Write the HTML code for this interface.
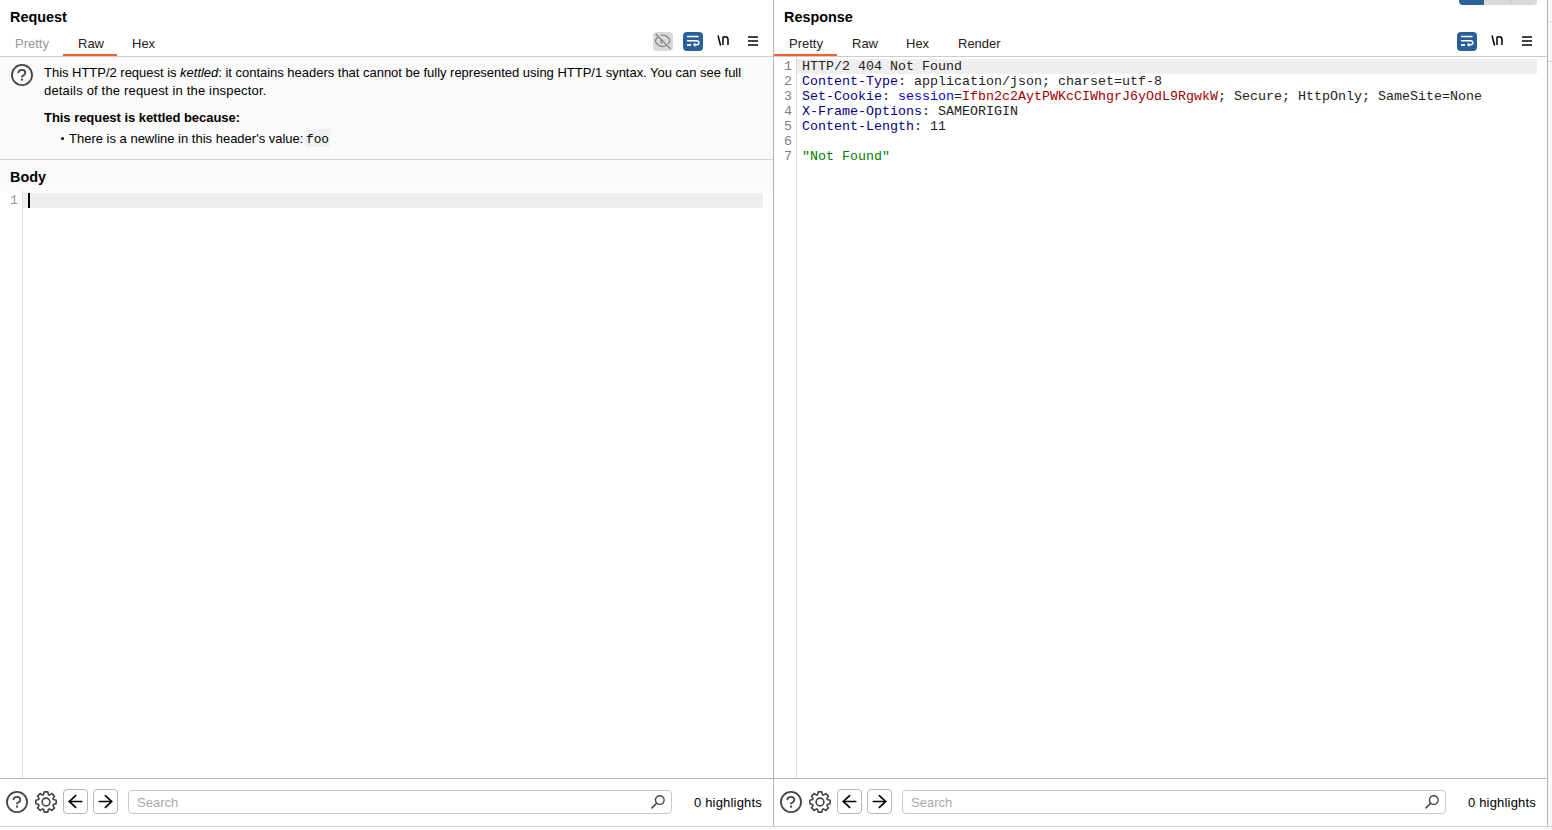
<!DOCTYPE html>
<html><head><meta charset="utf-8">
<style>
*{margin:0;padding:0;box-sizing:border-box}
html,body{width:1552px;height:830px;overflow:hidden;background:#fff}
body{position:relative;font-family:"Liberation Sans",sans-serif;color:#000}
.a{position:absolute;white-space:pre}
.title{font-weight:bold;font-size:15.4px;line-height:18px;transform:scaleX(0.935);transform-origin:0 0}
.tab{font-size:13px;line-height:15px}
.ui{font-size:13px;line-height:15px}
.mono{font-family:"Liberation Mono",monospace}
.hn{color:#000080}
.hl{position:absolute;height:1px}
.vl{position:absolute;width:1px}
</style></head><body>
<div class="a title" style="left:10px;top:8px">Request</div>
<div class="a tab" style="left:15px;top:36px;color:#999">Pretty</div>
<div class="a tab" style="left:78px;top:36px;color:#222">Raw</div>
<div class="a tab" style="left:132px;top:36px;color:#222">Hex</div>
<div class="a" style="left:63px;top:54px;width:54px;height:2px;background:#ff5c26"></div>
<div class="hl" style="left:0px;top:56px;width:773px;background:#c9cdcd"></div>
<svg class="a" style="left:653px;top:32px" width="20" height="19" viewBox="0 0 20 19"><rect width="20" height="19" rx="4" fill="#d9d9d9"/>
<g fill="none" stroke="#888" stroke-width="1.3" stroke-linecap="round">
<path d="M5,4.8 C3.6,6.2 2.3,7.6 2.3,9 C3,11.8 6,14.5 9.4,14.5 C10.8,14.5 12.1,14.1 13.1,13.5"/>
<path d="M8.4,3.3 C11.6,2.4 15.4,4.8 16.9,8.2 C17.1,9.3 16.4,10.6 15.4,11.5"/>
<path d="M8.3,8 C7.5,9 7.8,10.4 8.9,11.1"/>
<path d="M3.1,2.2 L17.2,16.6"/></g></svg>
<svg class="a" style="left:683px;top:32px" width="20" height="19" viewBox="0 0 20 19"><rect width="20" height="19" rx="4" fill="#2a6099"/>
<g fill="none" stroke="#fff" stroke-width="1.4" stroke-linecap="round">
<path d="M4.6,4.5 H15"/><path d="M4.6,8.8 H13.7 C15,8.8 15.9,9.7 15.9,10.8 C15.9,11.9 15,12.8 13.7,12.8 H11.8"/></g>
<rect x="4" y="12.1" width="4.1" height="1.8" fill="#fff"/>
<path d="M9.8,12.8 L12.4,10.6 L12.4,15 Z" fill="#fff"/></svg>
<svg class="a" style="left:716px;top:34px" width="14" height="13" viewBox="0 0 14 13"><g fill="none" stroke="#000" stroke-width="1.5"><path d="M2,1.5 L4.6,11.5"/><path d="M7,11 V3.2 C7.8,3 8.6,2.8 9.4,2.8 C11.1,2.8 12,3.8 12,5.6 V11" /></g></svg>
<div class="a" style="left:748px;top:36px;width:10px;height:2px;background:#444"></div>
<div class="a" style="left:748px;top:40px;width:10px;height:2px;background:#444"></div>
<div class="a" style="left:748px;top:44px;width:10px;height:2px;background:#444"></div>

  <div class="a" style="left:0;top:57px;width:773px;height:134px;background:#fafafa"></div>
  <div class="hl" style="left:0;top:159px;width:773px;background:#d6d6d6"></div>
  <svg class="a" style="left:11px;top:64px" width="22" height="22" viewBox="0 0 22 22"><circle cx="11" cy="11" r="10.05" fill="none" stroke="#444" stroke-width="1.8"/><path d="M7.4,8.4 C7.8,6.8 9.2,5.9 11,5.9 C12.9,5.9 14.3,7.2 14.3,9 C14.3,10.9 12.4,11.6 11,12.5" fill="none" stroke="#444" stroke-width="1.8" stroke-linecap="round"/><rect x="10" y="14.6" width="2" height="2" fill="#444"/></svg>
  <div class="a ui" style="left:44px;top:64px;line-height:18px;letter-spacing:-0.02px">This HTTP/2 request is <i>kettled</i>: it contains headers that cannot be fully represented using HTTP/1 syntax. You can see full</div>
  <div class="a ui" style="left:44px;top:82px;line-height:18px;letter-spacing:0.18px">details of the request in the inspector.</div>
  <div class="a ui" style="left:44px;top:110px;font-weight:bold;letter-spacing:-0.04px">This request is kettled because:</div>
  <div class="a" style="left:61px;top:137px;width:3.4px;height:3.4px;border-radius:50%;background:#000"></div>
  <div class="a ui" style="left:69px;top:131px">There is a newline in this header's value: </div>
  <div class="a" style="left:306px;top:129px;width:24px;height:18px;background:#f0f0f2"></div>
  <div class="a mono" style="left:306px;top:132px;font-size:12.8px">foo</div>
  <div class="a title" style="left:10px;top:168px">Body</div>
  <div class="vl" style="left:22px;top:191px;height:587px;background:#dcdcdc"></div>
  <div class="a" style="left:23px;top:193px;width:740px;height:15px;background:#efefef"></div>
  <div class="a" style="left:28px;top:193px;width:2px;height:15px;background:#000"></div>
  <div class="a mono" style="left:10px;top:193px;font-size:13.33px;line-height:15px;color:#999">1</div>

<div class="hl" style="left:0px;top:778px;width:773px;background:#b9b5b5"></div>
<svg class="a" style="left:6px;top:791px" width="22" height="22" viewBox="0 0 22 22"><circle cx="11" cy="11" r="10.05" fill="none" stroke="#444" stroke-width="1.8"/><path d="M7.4,8.4 C7.8,6.8 9.2,5.9 11,5.9 C12.9,5.9 14.3,7.2 14.3,9 C14.3,10.9 12.4,11.6 11,12.5" fill="none" stroke="#444" stroke-width="1.8" stroke-linecap="round"/><rect x="10" y="14.6" width="2" height="2" fill="#444"/></svg>
<svg class="a" style="left:34px;top:790px" width="24" height="24" viewBox="0 0 24 24"><path d="M9.49,4.72 L10.21,1.86 L13.79,1.86 L14.51,4.72 A7.70,7.70 0 0 0 15.38,5.08 L17.91,3.56 L20.44,6.09 L18.92,8.62 A7.70,7.70 0 0 0 19.28,9.49 L22.14,10.21 L22.14,13.79 L19.28,14.51 A7.70,7.70 0 0 0 18.92,15.38 L20.44,17.91 L17.91,20.44 L15.38,18.92 A7.70,7.70 0 0 0 14.51,19.28 L13.79,22.14 L10.21,22.14 L9.49,19.28 A7.70,7.70 0 0 0 8.62,18.92 L6.09,20.44 L3.56,17.91 L5.08,15.38 A7.70,7.70 0 0 0 4.72,14.51 L1.86,13.79 L1.86,10.21 L4.72,9.49 A7.70,7.70 0 0 0 5.08,8.62 L3.56,6.09 L6.09,3.56 L8.62,5.08 A7.70,7.70 0 0 0 9.49,4.72 Z" fill="none" stroke="#444" stroke-width="1.6" stroke-linejoin="round"/><circle cx="12" cy="12" r="3.9" fill="none" stroke="#444" stroke-width="1.6"/></svg>
<div class="a" style="left:63px;top:789px;width:25px;height:25px;border:1px solid #bcb5b5;border-radius:4px"></div>
<div class="a" style="left:93px;top:789px;width:25px;height:25px;border:1px solid #bcb5b5;border-radius:4px"></div>
<svg class="a" style="left:63px;top:789px" width="25" height="25" viewBox="0 0 25 25"><g fill="none" stroke="#000" stroke-width="1.7" stroke-linecap="round" stroke-linejoin="miter"><path d="M6.3,12.5 H18.7"/><path d="M12.6,6.6 L6.4,12.5 L12.6,18.4"/></g></svg>
<svg class="a" style="left:93px;top:789px" width="25" height="25" viewBox="0 0 25 25"><g fill="none" stroke="#000" stroke-width="1.7" stroke-linecap="round" stroke-linejoin="miter"><path d="M6.3,12.5 H18.5"/><path d="M12.4,6.6 L18.6,12.5 L12.4,18.4"/></g></svg>
<div class="a" style="left:128px;top:790px;width:544px;height:24px;border:1px solid #cbc8c8;border-radius:4px"></div>
<div class="a ui" style="left:137px;top:795px;color:#a8a8a8">Search</div>
<svg class="a" style="left:650px;top:794px" width="16" height="16" viewBox="0 0 16 16"><circle cx="9.8" cy="6.1" r="4.3" fill="none" stroke="#444" stroke-width="1.4"/><path d="M6.6,9.3 L2,13.9" stroke="#444" stroke-width="1.6" stroke-linecap="round"/></svg>
<div class="a ui" style="left:694px;top:795px;letter-spacing:0.18px">0 highlights</div>
<div class="vl" style="left:773px;top:0;height:826px;background:#b5b1b1"></div>
<div class="a title" style="left:784px;top:8px">Response</div>
<div class="a tab" style="left:789px;top:36px;color:#222">Pretty</div>
<div class="a tab" style="left:852px;top:36px;color:#222">Raw</div>
<div class="a tab" style="left:906px;top:36px;color:#222">Hex</div>
<div class="a tab" style="left:958px;top:36px;color:#222">Render</div>
<div class="a" style="left:774px;top:54px;width:63px;height:2px;background:#ff5c26"></div>
<div class="hl" style="left:774px;top:56px;width:773px;background:#c9cdcd"></div>
<svg class="a" style="left:1457px;top:32px" width="20" height="19" viewBox="0 0 20 19"><rect width="20" height="19" rx="4" fill="#2a6099"/>
<g fill="none" stroke="#fff" stroke-width="1.4" stroke-linecap="round">
<path d="M4.6,4.5 H15"/><path d="M4.6,8.8 H13.7 C15,8.8 15.9,9.7 15.9,10.8 C15.9,11.9 15,12.8 13.7,12.8 H11.8"/></g>
<rect x="4" y="12.1" width="4.1" height="1.8" fill="#fff"/>
<path d="M9.8,12.8 L12.4,10.6 L12.4,15 Z" fill="#fff"/></svg>
<svg class="a" style="left:1490px;top:34px" width="14" height="13" viewBox="0 0 14 13"><g fill="none" stroke="#000" stroke-width="1.5"><path d="M2,1.5 L4.6,11.5"/><path d="M7,11 V3.2 C7.8,3 8.6,2.8 9.4,2.8 C11.1,2.8 12,3.8 12,5.6 V11" /></g></svg>
<div class="a" style="left:1522px;top:36px;width:10px;height:2px;background:#444"></div>
<div class="a" style="left:1522px;top:40px;width:10px;height:2px;background:#444"></div>
<div class="a" style="left:1522px;top:44px;width:10px;height:2px;background:#444"></div>

  <div class="vl" style="left:796px;top:57px;height:721px;background:#dcdcdc"></div>
  <div class="a" style="left:797px;top:59px;width:740px;height:15px;background:#efefef"></div>
  <div class="a mono" style="left:784px;top:59px;font-size:13.33px;line-height:15px;color:#808080">1
2
3
4
5
6
7</div>
  <div class="a mono" style="left:802px;top:59px;font-size:13.33px;line-height:15px;color:#222"><span>HTTP/2 404 Not Found</span>
<span class="hn">Content-Type</span>: application/json; charset=utf-8
<span class="hn">Set-Cookie</span>: <span style="color:#0000c8">session</span>=<span style="color:#a00000">Ifbn2c2AytPWKcCIWhgrJ6yOdL9RgwkW</span>; Secure; HttpOnly; SameSite=None
<span class="hn">X-Frame-Options</span>: SAMEORIGIN
<span class="hn">Content-Length</span>: 11

<span style="color:#008000">"Not Found"</span></div>

<div class="hl" style="left:774px;top:778px;width:773px;background:#b9b5b5"></div>
<svg class="a" style="left:780px;top:791px" width="22" height="22" viewBox="0 0 22 22"><circle cx="11" cy="11" r="10.05" fill="none" stroke="#444" stroke-width="1.8"/><path d="M7.4,8.4 C7.8,6.8 9.2,5.9 11,5.9 C12.9,5.9 14.3,7.2 14.3,9 C14.3,10.9 12.4,11.6 11,12.5" fill="none" stroke="#444" stroke-width="1.8" stroke-linecap="round"/><rect x="10" y="14.6" width="2" height="2" fill="#444"/></svg>
<svg class="a" style="left:808px;top:790px" width="24" height="24" viewBox="0 0 24 24"><path d="M9.49,4.72 L10.21,1.86 L13.79,1.86 L14.51,4.72 A7.70,7.70 0 0 0 15.38,5.08 L17.91,3.56 L20.44,6.09 L18.92,8.62 A7.70,7.70 0 0 0 19.28,9.49 L22.14,10.21 L22.14,13.79 L19.28,14.51 A7.70,7.70 0 0 0 18.92,15.38 L20.44,17.91 L17.91,20.44 L15.38,18.92 A7.70,7.70 0 0 0 14.51,19.28 L13.79,22.14 L10.21,22.14 L9.49,19.28 A7.70,7.70 0 0 0 8.62,18.92 L6.09,20.44 L3.56,17.91 L5.08,15.38 A7.70,7.70 0 0 0 4.72,14.51 L1.86,13.79 L1.86,10.21 L4.72,9.49 A7.70,7.70 0 0 0 5.08,8.62 L3.56,6.09 L6.09,3.56 L8.62,5.08 A7.70,7.70 0 0 0 9.49,4.72 Z" fill="none" stroke="#444" stroke-width="1.6" stroke-linejoin="round"/><circle cx="12" cy="12" r="3.9" fill="none" stroke="#444" stroke-width="1.6"/></svg>
<div class="a" style="left:837px;top:789px;width:25px;height:25px;border:1px solid #bcb5b5;border-radius:4px"></div>
<div class="a" style="left:867px;top:789px;width:25px;height:25px;border:1px solid #bcb5b5;border-radius:4px"></div>
<svg class="a" style="left:837px;top:789px" width="25" height="25" viewBox="0 0 25 25"><g fill="none" stroke="#000" stroke-width="1.7" stroke-linecap="round" stroke-linejoin="miter"><path d="M6.3,12.5 H18.7"/><path d="M12.6,6.6 L6.4,12.5 L12.6,18.4"/></g></svg>
<svg class="a" style="left:867px;top:789px" width="25" height="25" viewBox="0 0 25 25"><g fill="none" stroke="#000" stroke-width="1.7" stroke-linecap="round" stroke-linejoin="miter"><path d="M6.3,12.5 H18.5"/><path d="M12.4,6.6 L18.6,12.5 L12.4,18.4"/></g></svg>
<div class="a" style="left:902px;top:790px;width:544px;height:24px;border:1px solid #cbc8c8;border-radius:4px"></div>
<div class="a ui" style="left:911px;top:795px;color:#a8a8a8">Search</div>
<svg class="a" style="left:1424px;top:794px" width="16" height="16" viewBox="0 0 16 16"><circle cx="9.8" cy="6.1" r="4.3" fill="none" stroke="#444" stroke-width="1.4"/><path d="M6.6,9.3 L2,13.9" stroke="#444" stroke-width="1.6" stroke-linecap="round"/></svg>
<div class="a ui" style="left:1468px;top:795px;letter-spacing:0.18px">0 highlights</div>
<div class="vl" style="left:1547px;top:0;height:826px;background:#b5b1b1"></div>
<div class="a" style="left:1548px;top:0;width:4px;height:826px;background:#fafafa"></div>
<div class="hl" style="left:1548px;top:21px;width:4px;background:#dddddd"></div>
<div class="hl" style="left:1548px;top:61px;width:4px;background:#dddddd"></div>
<div class="hl" style="left:0;top:826px;width:1552px;background:#d3d3d3"></div>
<div class="a" style="left:0;top:827px;width:1552px;height:3px;background:#fafafa"></div>
<div class="a" style="left:1459px;top:0;width:25px;height:5px;background:#2a6099;border-bottom-left-radius:4px"></div>
<div class="a" style="left:1484px;top:0;width:53px;height:5px;background:#d9d9d9;border-bottom-right-radius:4px"></div>
<div class="vl" style="left:1510px;top:0;height:5px;background:#c8c8c8"></div>
</body></html>
